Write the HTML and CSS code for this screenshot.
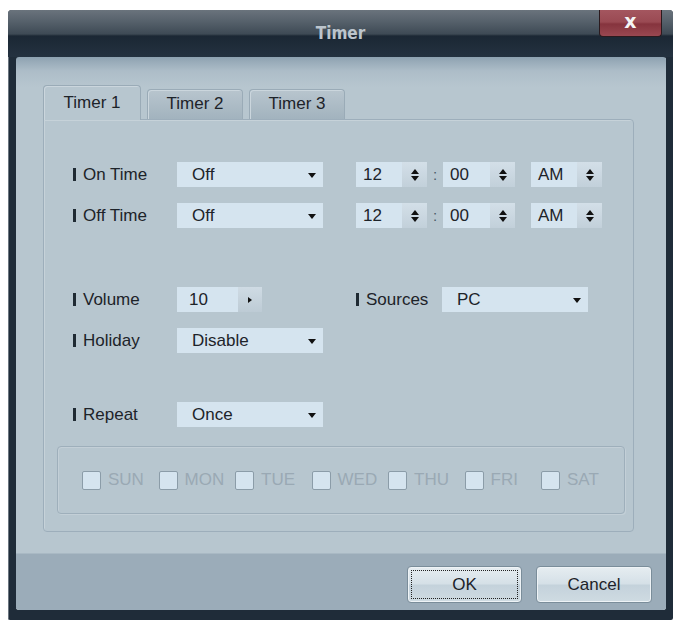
FILE: index.html
```html
<!DOCTYPE html>
<html lang="en">
<head>
  <meta charset="UTF-8" />
  <title>Timer</title>
  <link rel="stylesheet" href="styles.css">
</head>
<body>
  <div class="window">
    <div class="titlebar">
      <span class="title">Timer</span>
      <div class="close">x</div>
    </div>

    <div class="client">
      <div class="main">
        <div class="tabs">
          <div class="tab active">Timer 1</div>
          <div class="tab">Timer 2</div>
          <div class="tab">Timer 3</div>
        </div>

        <div class="panel">
          <div class="row first">
            <div class="label"><i></i>On Time</div>
            <div class="combo"><span>Off</span><b class="caret"></b></div>
            <div class="time">
              <div class="spin"><span>12</span><div class="arrows"><b class="up"></b><b class="down"></b></div></div>
              <div class="colon">:</div>
              <div class="spin wide"><span>00</span><div class="arrows"><b class="up"></b><b class="down"></b></div></div>
              <div class="spin ampm"><span>AM</span><div class="arrows"><b class="up"></b><b class="down"></b></div></div>
            </div>
          </div>

          <div class="row near">
            <div class="label"><i></i>Off Time</div>
            <div class="combo"><span>Off</span><b class="caret"></b></div>
            <div class="time">
              <div class="spin"><span>12</span><div class="arrows"><b class="up"></b><b class="down"></b></div></div>
              <div class="colon">:</div>
              <div class="spin wide"><span>00</span><div class="arrows"><b class="up"></b><b class="down"></b></div></div>
              <div class="spin ampm"><span>AM</span><div class="arrows"><b class="up"></b><b class="down"></b></div></div>
            </div>
          </div>

          <div class="row far">
            <div class="label"><i></i>Volume</div>
            <div class="volume"><span>10</span><div class="play"><b></b></div></div>
            <div class="label sources"><i></i>Sources</div>
            <div class="combo"><span>PC</span><b class="caret"></b></div>
          </div>

          <div class="row near">
            <div class="label"><i></i>Holiday</div>
            <div class="combo"><span>Disable</span><b class="caret"></b></div>
          </div>

          <div class="row repeat">
            <div class="label"><i></i>Repeat</div>
            <div class="combo"><span>Once</span><b class="caret"></b></div>
          </div>

          <div class="days">
            <label class="day"><span class="box"></span>SUN</label>
            <label class="day"><span class="box"></span>MON</label>
            <label class="day"><span class="box"></span>TUE</label>
            <label class="day"><span class="box"></span>WED</label>
            <label class="day"><span class="box"></span>THU</label>
            <label class="day"><span class="box"></span>FRI</label>
            <label class="day"><span class="box"></span>SAT</label>
          </div>
        </div>
      </div>

      <div class="footer">
        <button class="btn ok"><span>OK</span></button>
        <button class="btn">Cancel</button>
      </div>
    </div>
  </div>
</body>
</html>
```

FILE: styles.css
```css
body {
  margin: 0;
  background: #fff;
  font-family: 'Liberation Sans', Arial, sans-serif;
  font-size: 17px;
  color: #1d2329;
}
.window {
  margin: 10px 0 0 8px;
  width: 665px;
  height: 610px;
  background: #1f2c39;
  border-radius: 4px 4px 2px 2px;
  box-shadow: inset 1px 1px 0 #6c7680;
  display: flex;
  flex-direction: column;
}
.titlebar {
  height: 47px;
  flex: none;
  display: grid;
  grid-template-columns: 1fr auto 1fr;
  background: linear-gradient(#6a737c 0, #55606a 12px, #3e4a55 24px, #1b2734 26px, #243240 47px);
  border-radius: 4px 4px 0 0;
}
.title {
  grid-column: 2;
  align-self: center;
  margin-top: -2px;
  font-family: 'DejaVu Sans Condensed', 'DejaVu Sans', sans-serif;
  font-weight: bold;
  font-size: 17px;
  color: #bcc5cd;
}
.close {
  grid-column: 3;
  justify-self: end;
  margin-right: 11px;
  width: 61px;
  height: 26px;
  border: 1px solid #2a1a1e;
  border-top: none;
  border-radius: 0 0 4px 4px;
  background: linear-gradient(#a4565f 0, #9a4a53 12px, #86343e 14px, #9a4952 27px);
  color: #f4f4f4;
  font-family: 'DejaVu Sans', sans-serif;
  font-weight: bold;
  font-size: 19px;
  line-height: 22px;
  text-align: center;
}
.client {
  flex: 1;
  margin: 0 7px 10px 8px;
  display: flex;
  flex-direction: column;
  border-radius: 3px;
  overflow: hidden;
  box-shadow: inset -1px -2px 0 #e8eef2;
}
.main {
  height: 496px;
  box-sizing: border-box;
  padding: 28px 32px 21px 27px;
  background: linear-gradient(#8ea2b1 0, #adbdc8 14px, #b7c6cf 30px);
}
.tabs {
  display: flex;
  align-items: flex-end;
  gap: 6px;
  height: 34px;
  position: relative;
  z-index: 1;
}
.tab {
  width: 96px;
  height: 30px;
  box-sizing: border-box;
  border: 1px solid #9aabb7;
  border-bottom: none;
  border-radius: 4px 4px 0 0;
  background: linear-gradient(#b8c5ce, #a2b3be);
  text-align: center;
  line-height: 28px;
  box-shadow: inset 1px 1px 0 #cbd6dd;
}
.tab.active {
  width: 98px;
  height: 35px;
  margin-bottom: -1px;
  background: #b7c6cf;
  line-height: 34px;
}
.panel {
  height: 413px;
  box-sizing: border-box;
  border: 1px solid #9daebb;
  border-radius: 0 4px 4px 4px;
  box-shadow: inset 1px 1px 0 #c6d2d9;
}
.row {
  display: flex;
  align-items: center;
  height: 25px;
  padding-left: 29px;
}
.row.first { margin-top: 42px; }
.row.near { margin-top: 16px; }
.row.far { margin-top: 59px; }
.row.repeat { margin-top: 49px; }
.label {
  width: 104px;
  flex: none;
  display: flex;
  align-items: center;
}
.label i {
  width: 3px;
  height: 13px;
  background: #1f2a33;
  margin-right: 7px;
}
.combo {
  width: 146px;
  height: 25px;
  flex: none;
  box-sizing: border-box;
  background: #d5e4ef;
  display: flex;
  align-items: center;
  justify-content: space-between;
  padding: 0 7px 0 15px;
}
.caret {
  width: 0;
  height: 0;
  border-left: 4.5px solid transparent;
  border-right: 4.5px solid transparent;
  border-top: 5px solid #111;
  margin-top: 1px;
}
.time {
  display: flex;
  align-items: center;
  margin-left: 33px;
}
.spin {
  width: 71px;
  height: 25px;
  display: flex;
  background: #d5e4ef;
}
.spin span {
  flex: 1;
  padding-left: 7px;
  line-height: 25px;
}
.spin.wide { width: 72px; }
.spin.ampm { margin-left: 16px; }
.arrows {
  width: 25px;
  background: linear-gradient(#d3dfe8, #c2d0da);
  display: flex;
  flex-direction: column;
  align-items: center;
  justify-content: center;
  gap: 2px;
}
.arrows b {
  width: 0;
  height: 0;
  border-left: 4.5px solid transparent;
  border-right: 4.5px solid transparent;
}
.arrows .up { border-bottom: 5px solid #111; }
.arrows .down { border-top: 5px solid #111; }
.colon {
  width: 16px;
  text-align: center;
  color: #4a5a66;
  font-size: 15px;
}
.volume {
  width: 85px;
  height: 25px;
  display: flex;
  background: #d5e4ef;
}
.volume span {
  flex: 1;
  padding-left: 12px;
  line-height: 25px;
}
.play {
  width: 24px;
  background: linear-gradient(#cfdbe4, #bdcbd5);
  display: flex;
  align-items: center;
  justify-content: center;
}
.play b {
  width: 0;
  height: 0;
  border-top: 3.5px solid transparent;
  border-bottom: 3.5px solid transparent;
  border-left: 4px solid #111;
}
.label.sources {
  width: 86px;
  margin-left: 94px;
}
.days {
  margin: 19px 8px 0 13px;
  height: 68px;
  box-sizing: border-box;
  border: 1px solid #9eafbb;
  border-radius: 4px;
  box-shadow: inset 1px 1px 0 #c3cfd7, 1px 1px 0 #c3cfd7;
  display: grid;
  grid-template-columns: repeat(7, 76.5px);
  align-items: center;
  padding-left: 24px;
}
.day {
  display: flex;
  align-items: center;
  gap: 7px;
  color: #9aa9b4;
  font-size: 17px;
}
.box {
  width: 19px;
  height: 19px;
  box-sizing: border-box;
  background: #d5e4ef;
  border: 1px solid #8b9ca8;
  border-radius: 2px;
}
.footer {
  flex: 1;
  background: #9bacb9;
  box-shadow: inset 0 1px 0 #a9b9c4;
  display: flex;
  justify-content: flex-end;
  align-items: flex-start;
  gap: 14px;
  padding: 13px 14px 0 0;
}
.btn {
  width: 116px;
  height: 37px;
  border: 1px solid #7a8d9a;
  border-radius: 4px;
  background: linear-gradient(#e6edf1 0, #d5e0e7 48%, #c4d2db 52%, #cfdbe2 100%);
  font-family: 'Liberation Sans', Arial, sans-serif;
  font-size: 17px;
  color: #1d2329;
  box-shadow: inset 0 0 0 1px #eef3f6;
  padding: 0;
}
.btn.ok {
  width: 115px;
  padding: 3px;
}
.btn.ok span {
  display: block;
  height: 100%;
  box-sizing: border-box;
  border: 1px dotted #222;
  line-height: 28px;
}
```
